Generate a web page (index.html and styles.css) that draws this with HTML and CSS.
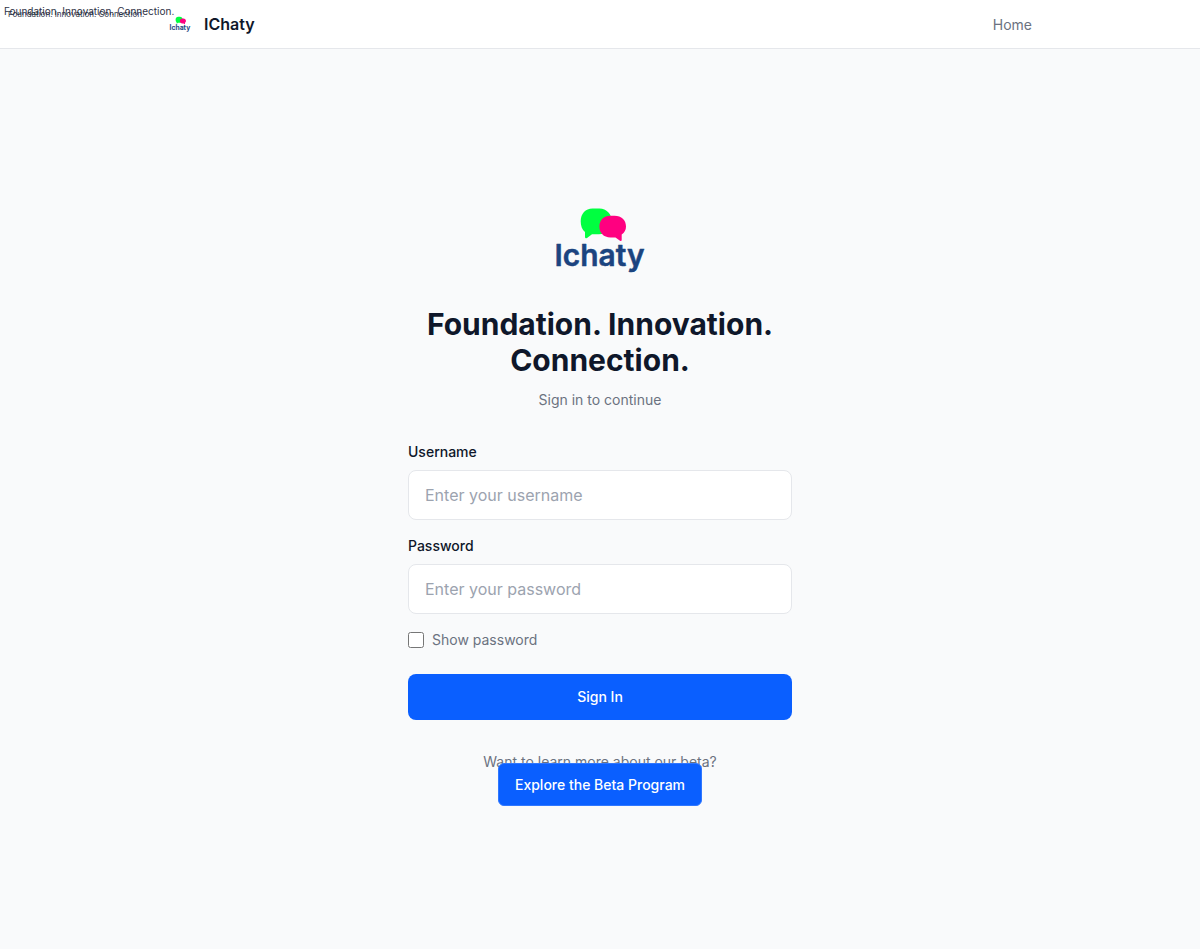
FILE: index.html
```html
<!DOCTYPE html>
<html lang="en">
<head>
<meta charset="utf-8">
<title>IChaty</title>
<link rel="stylesheet" href="styles.css">
</head>
<body>
<svg width="0" height="0" class="defs" aria-hidden="true">
  <symbol id="logo" viewBox="0 0 96 96">
    <path fill="#00ff40" d="M40.500 16.400H47.500C54.500 16.400 59.800 22 59.800 29.300C59.800 37 54.500 42.300 47 42.300H40L35 46Q33 47 33 44.800V40C30 37.500 28.700 34 28.700 29.300C28.700 21.500 33.500 16.400 40.500 16.400Z"/>
    <path fill="#ff0080" d="M58.500 23.700H62.500C69.500 23.700 74 28 74 34.500C74 38 72.500 40.500 69.700 42.500V47.800Q69.700 49.600 68 48.700L63.500 45.500H58.500C51.500 45.500 47.400 41 47.400 34.600C47.400 28 51.500 23.700 58.500 23.700Z"/>
    <text class="logo-word" x="2.600" y="74.300" textLength="90" lengthAdjust="spacingAndGlyphs">Ichaty</text>
  </symbol>
</svg>
<div class="tagline tagline-large">Foundation. Innovation. Connection.</div>
<div class="tagline tagline-small">Foundation. Innovation. Connection.</div>
<header class="header">
  <nav class="nav">
    <a class="brand"><svg class="brand-logo"><use href="#logo"/></svg><span>IChaty</span></a>
    <a class="nav-link">Home</a>
  </nav>
</header>
<main class="main">
  <div class="panel">
    <svg class="logo"><use href="#logo"/></svg>
    <h1 class="title">Foundation. Innovation. Connection.</h1>
    <p class="subtitle">Sign in to continue</p>
    <form class="form">
      <label class="label" for="username">Username</label>
      <input class="input" id="username" type="text" placeholder="Enter your username">
      <label class="label" for="password">Password</label>
      <input class="input" id="password" type="password" placeholder="Enter your password">
      <label class="show"><input class="check" type="checkbox"><span>Show password</span></label>
      <button class="submit" type="button">Sign In</button>
    </form>
    <p class="beta-text">Want to learn more about our beta?</p>
    <a class="beta-link">Explore the Beta Program</a>
  </div>
</main>
</body>
</html>
```
FILE: styles.css
```css
* { box-sizing: border-box; margin: 0; }
body {
  min-height: 949px;
  display: flex;
  flex-direction: column;
  background: #f9fafb;
  color: #0f172a;
  font: 14px/20px Inter, sans-serif;
}
.defs { position: absolute; }
.logo-word {
  font: 600 30px Inter, sans-serif;
  fill: #1b4480;
  stroke: #1b4480;
  stroke-width: .5px;
  stroke-linejoin: round;
}
.tagline {
  position: absolute;
  color: #1e293b;
  opacity: .95;
  white-space: nowrap;
}
.tagline-large { left: 4px; top: 4px; font-size: 10px; line-height: 15px; }
.tagline-small { left: 8px; top: 8px; font-size: 8px; line-height: 12px; }
.header { height: 49px; background: #fff; border-bottom: 1px solid #e5e7eb; }
.nav {
  width: 864px;
  height: 48px;
  margin: 0 auto;
  display: flex;
  align-items: center;
  justify-content: space-between;
}
.brand { display: flex; align-items: center; gap: 12px; font-size: 16px; font-weight: 600; line-height: 24px; }
.brand-logo { width: 24px; height: 24px; padding: 1px; }
.nav-link { color: #6b7280; padding-top: 2px; }
.main { flex: 1; display: flex; align-items: center; justify-content: center; }
.panel { width: 384px; display: flex; flex-direction: column; align-items: center; }
.logo { width: 96px; height: 96px; margin-bottom: 18px; }
.title { font-size: 30px; font-weight: 700; line-height: 36px; text-align: center; }
.subtitle { margin-top: 12px; color: #6b7280; }
.form { width: 100%; margin-top: 32px; display: flex; flex-direction: column; }
.label { font-weight: 500; margin-bottom: 8px; }
.input {
  height: 50px;
  margin-bottom: 16px;
  padding: 12px 16px;
  background: #fff;
  border: 1px solid #e5e7eb;
  border-radius: 8px;
  font: 16px/24px Inter, sans-serif;
}
.input::placeholder { color: #9ca3af; }
.show { display: flex; align-items: center; gap: 8px; color: #6b7280; }
.check { width: 16px; height: 16px; margin: 0; }
.submit {
  height: 46px;
  margin-top: 24px;
  border: 0;
  border-radius: 8px;
  background: #0a5fff;
  color: #fff;
  font: 500 14px/20px Inter, sans-serif;
}
.beta-text { margin-top: 32px; color: #6b7280; }
.beta-link {
  margin-top: -9px;
  padding: 10px 16px;
  border: 1px solid #2f77ff;
  border-radius: 6px;
  background: #0a5fff;
  color: #fff;
  font-weight: 500;
  line-height: 21px;
  z-index: 1;
}
```
